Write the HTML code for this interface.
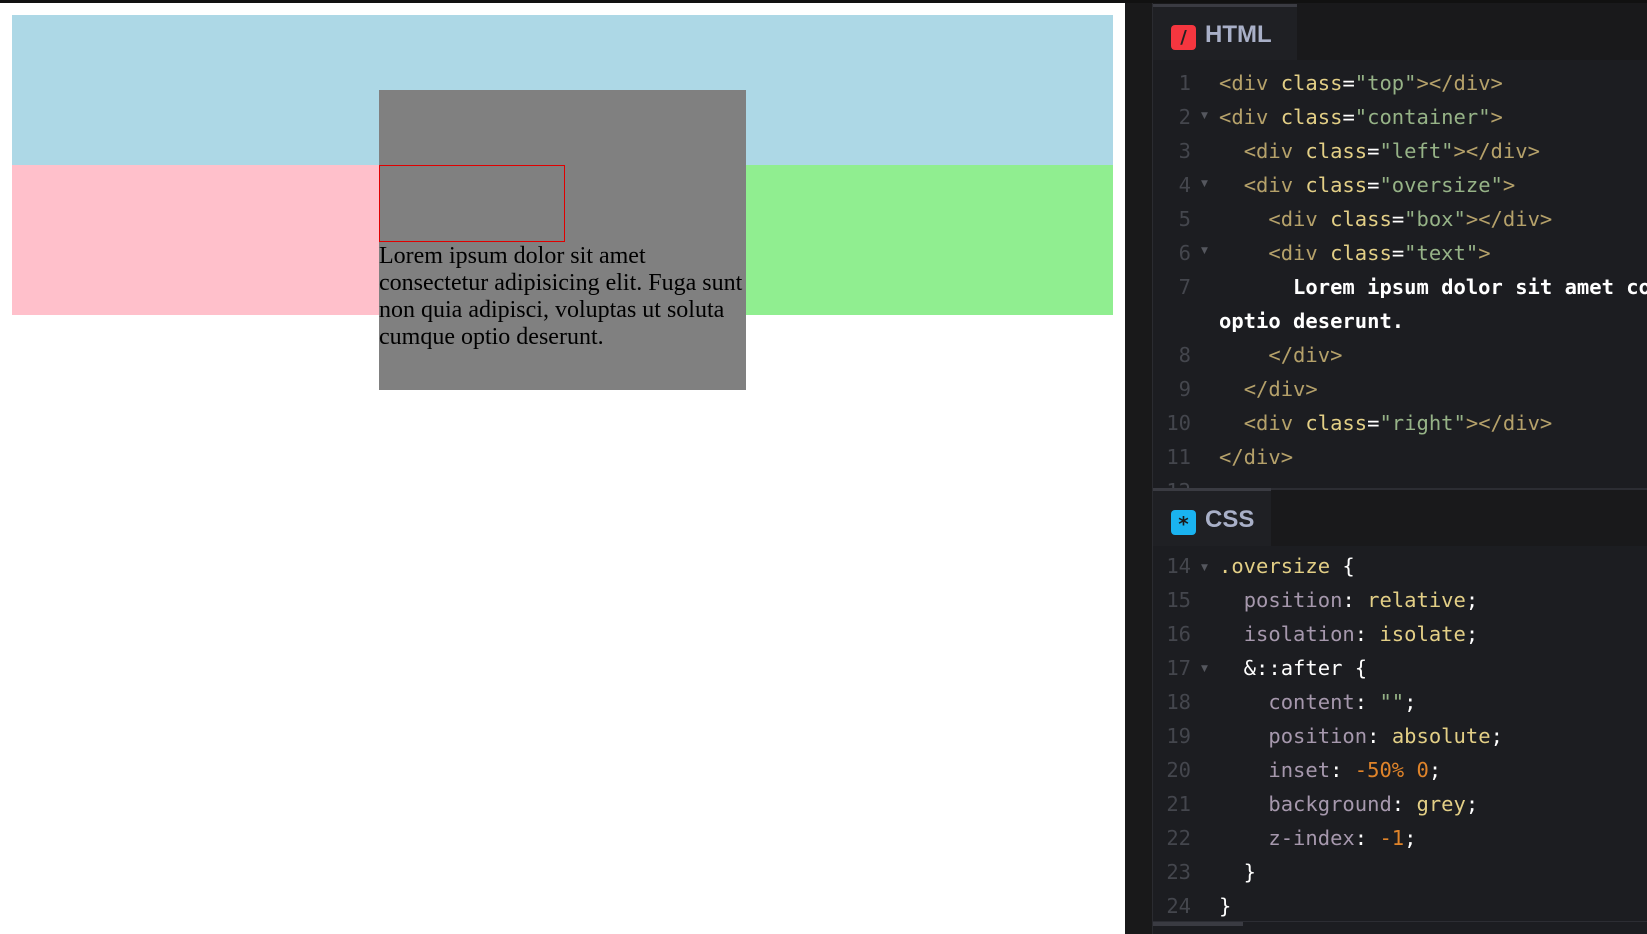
<!DOCTYPE html>
<html><head><meta charset="utf-8"><style>
*{margin:0;padding:0;box-sizing:border-box}
body{width:1647px;height:934px;overflow:hidden;background:#fff;position:relative;font-family:"Liberation Serif",serif}
.abs{position:absolute}
#topbar{left:0;top:0;width:1647px;height:3px;background:#111}
#gut{left:1125px;top:3px;width:27px;height:931px;background:#19191a}
#ed{left:1152px;top:3px;width:495px;height:931px;background:#1c1d21;border-left:1px solid #2a2b30}
.hdr{position:absolute;left:0;width:495px;background:#19191b}
.tab{position:absolute;left:0;background:#1f2024;border-top:3px solid #3a3b42}
.tabt{position:absolute;font-family:"Liberation Sans",sans-serif;font-weight:bold;font-size:24px;color:#a9b0c8}
.ln{position:absolute;left:0;width:38px;text-align:right;color:#44464d;font-family:"DejaVu Sans Mono",monospace;font-size:20.5px;line-height:34px}
.cd{position:absolute;left:66px;white-space:pre;font-family:"DejaVu Sans Mono",monospace;font-size:20.5px;line-height:34px;color:#fff}
.fold{position:absolute;left:48px;color:#55575e;font-size:9px;font-family:"DejaVu Sans",sans-serif}
.t{color:#b5a16a}.a{color:#e3cf86}.s{color:#96b387}.w{color:#fff;font-weight:bold}.p{color:#a698ad}.v{color:#e3cf86}.n{color:#e0842a}
</style></head><body>
<div id="topbar" class="abs"></div>
<div class="abs" style="left:12px;top:15px;width:1101px;height:150px;background:#add8e6"></div>
<div class="abs" style="left:12px;top:165px;width:367px;height:150px;background:#ffc0cb"></div>
<div class="abs" style="left:746px;top:165px;width:367px;height:150px;background:#90ee90"></div>
<div class="abs" style="left:379px;top:90px;width:367px;height:300px;background:#808080"></div>
<div class="abs" style="left:379px;top:165px;width:186px;height:77px;border:1px solid #e00000"></div>
<div class="abs" style="left:379px;top:243px;width:367px;font-size:24px;line-height:27px;color:#000">Lorem ipsum dolor sit amet consectetur adipisicing elit. Fuga sunt non quia adipisci, voluptas ut soluta cumque optio deserunt.</div>
<div id="gut" class="abs"></div>
<div id="ed" class="abs">
 <div class="hdr" style="top:0;height:57px"></div>
 <div class="tab" style="top:1px;width:144px;height:56px"></div>
 <div class="abs" style="left:18px;top:22px;width:25px;height:25px;background:#f5363f;border-radius:4px;color:#222;font:bold 18px 'DejaVu Sans',sans-serif;text-align:center;line-height:25px">/</div>
 <div class="tabt" style="left:52px;top:18px">HTML</div>
 <div class="ln" style="top:63px;height:423px;overflow:hidden">1<br>2<br>3<br>4<br>5<br>6<br>7<br><br>8<br>9<br>10<br>11<br>12</div>
 <div class="fold" style="top:108px">▼</div><div class="fold" style="top:176px">▼</div><div class="fold" style="top:243px">▼</div>
 <div class="cd" style="top:63px;height:423px;overflow:hidden;width:495px"><span class="t">&lt;div</span> <span class="a">class</span>=<span class="s">"top"</span><span class="t">&gt;&lt;/div&gt;</span>
<span class="t">&lt;div</span> <span class="a">class</span>=<span class="s">"container"</span><span class="t">&gt;</span>
  <span class="t">&lt;div</span> <span class="a">class</span>=<span class="s">"left"</span><span class="t">&gt;&lt;/div&gt;</span>
  <span class="t">&lt;div</span> <span class="a">class</span>=<span class="s">"oversize"</span><span class="t">&gt;</span>
    <span class="t">&lt;div</span> <span class="a">class</span>=<span class="s">"box"</span><span class="t">&gt;&lt;/div&gt;</span>
    <span class="t">&lt;div</span> <span class="a">class</span>=<span class="s">"text"</span><span class="t">&gt;</span>
<span class="w">      Lorem ipsum dolor sit amet co</span>
<span class="w">optio deserunt.</span>
    <span class="t">&lt;/div&gt;</span>
  <span class="t">&lt;/div&gt;</span>
  <span class="t">&lt;div</span> <span class="a">class</span>=<span class="s">"right"</span><span class="t">&gt;&lt;/div&gt;</span>
<span class="t">&lt;/div&gt;</span></div>
 <div class="abs" style="left:0;top:485px;width:495px;height:2px;background:#2c2d33"></div>
 <div class="hdr" style="top:487px;height:56px"></div>
 <div class="tab" style="top:485px;width:118px;height:58px"></div>
 <div class="abs" style="left:18px;top:507px;width:25px;height:25px;background:#1ab3f0;border-radius:4px;color:#1a1a1a;font:bold 20px 'DejaVu Sans',sans-serif;text-align:center;line-height:28px">*</div>
 <div class="tabt" style="left:52px;top:503px">CSS</div>
 <div class="ln" style="top:546px">14<br>15<br>16<br>17<br>18<br>19<br>20<br>21<br>22<br>23<br>24</div>
 <div class="fold" style="top:560px">▼</div><div class="fold" style="top:661px">▼</div>
 <div class="cd" style="top:546px"><span class="a">.oversize</span> {
  <span class="p">position</span>: <span class="v">relative</span>;
  <span class="p">isolation</span>: <span class="v">isolate</span>;
  &amp;::after {
    <span class="p">content</span>: <span class="s">""</span>;
    <span class="p">position</span>: <span class="v">absolute</span>;
    <span class="p">inset</span>: <span class="n">-50% 0</span>;
    <span class="p">background</span>: <span class="v">grey</span>;
    <span class="p">z-index</span>: <span class="n">-1</span>;
  }
}</div>
 <div class="abs" style="left:0;top:918px;width:495px;height:1px;background:#2c2d33"></div>
 <div class="abs" style="left:0;top:919px;width:90px;height:4px;background:#3a3b42"></div>
</div>
</body></html>
